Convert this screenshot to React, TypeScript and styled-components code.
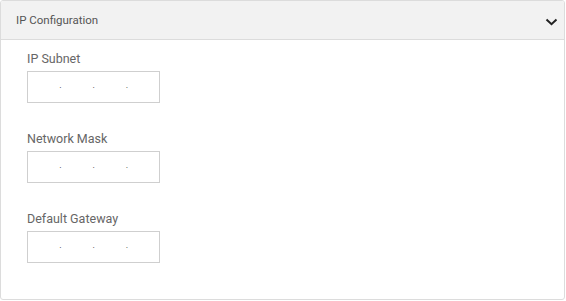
import React from "react";
import styled, { createGlobalStyle } from "styled-components";

const Global = createGlobalStyle`
  html, body { margin: 0; padding: 0; background: #ffffff; }
  body { font-family: Roboto, "Liberation Sans", Arial, sans-serif; }
`;

const Panel = styled.section`
  box-sizing: border-box;
  width: 565px;
  height: 300px;
  border: 1px solid #dcdcdc;
  border-radius: 3px;
  background: #fff;
  overflow: hidden;
`;

const Header = styled.header`
  height: 38px;
  background: #f2f2f2;
  border-bottom: 1px solid #dcdcdc;
  display: flex;
  align-items: center;
  justify-content: space-between;
  padding: 0 6px 0 15px;
`;

const Title = styled.h2`
  margin: 0;
  font-size: 11.5px;
  font-weight: 400;
  color: #555;
  letter-spacing: 0;
`;

const Chevron = styled.svg`
  width: 13px;
  height: 8px;
  display: block;
  margin-top: 4px;
`;

const Body = styled.div`
  padding: 11px 0 0 26px;
  display: flex;
  flex-direction: column;
  gap: 28px;
`;

const Field = styled.div`
  display: flex;
  flex-direction: column;
  gap: 4px;
`;

const Label = styled.label`
  font-size: 12.5px;
  line-height: 16px;
  color: #666;
`;

const IpBox = styled.div`
  box-sizing: border-box;
  width: 133px;
  height: 32px;
  border: 1px solid #cfcfcf;
  display: flex;
  align-items: center;
`;

const Octet = styled.input`
  flex: 1;
  min-width: 0;
  width: 0;
  border: none;
  outline: none;
  background: transparent;
  height: 100%;
  padding: 0;
  text-align: center;
  font-family: inherit;
  font-size: 12px;
  color: #333;
`;

const Dot = styled.span`
  font-size: 9px;
  line-height: 1;
  color: #333;
  width: 2px;
  text-align: center;
  transform: translateY(-2px);
`;

const IpInput = ({ id }: { id: string }) => (
  <IpBox id={id}>
    <Octet aria-label="octet 1" />
    <Dot>.</Dot>
    <Octet aria-label="octet 2" />
    <Dot>.</Dot>
    <Octet aria-label="octet 3" />
    <Dot>.</Dot>
    <Octet aria-label="octet 4" />
  </IpBox>
);

const fields = [
  { id: "subnet", label: "IP Subnet" },
  { id: "mask", label: "Network Mask" },
  { id: "gateway", label: "Default Gateway" },
];

export default function App() {
  return (
    <>
      <Global />
      <Panel>
        <Header>
          <Title>IP Configuration</Title>
          <Chevron viewBox="0 0 13 8">
            <path d="M1.5 1.5 L6.5 6.2 L11.5 1.5" fill="none" stroke="#222" strokeWidth="2" />
          </Chevron>
        </Header>
        <Body>
          {fields.map((f) => (
            <Field key={f.id}>
              <Label htmlFor={f.id}>{f.label}</Label>
              <IpInput id={f.id} />
            </Field>
          ))}
        </Body>
      </Panel>
    </>
  );
}
